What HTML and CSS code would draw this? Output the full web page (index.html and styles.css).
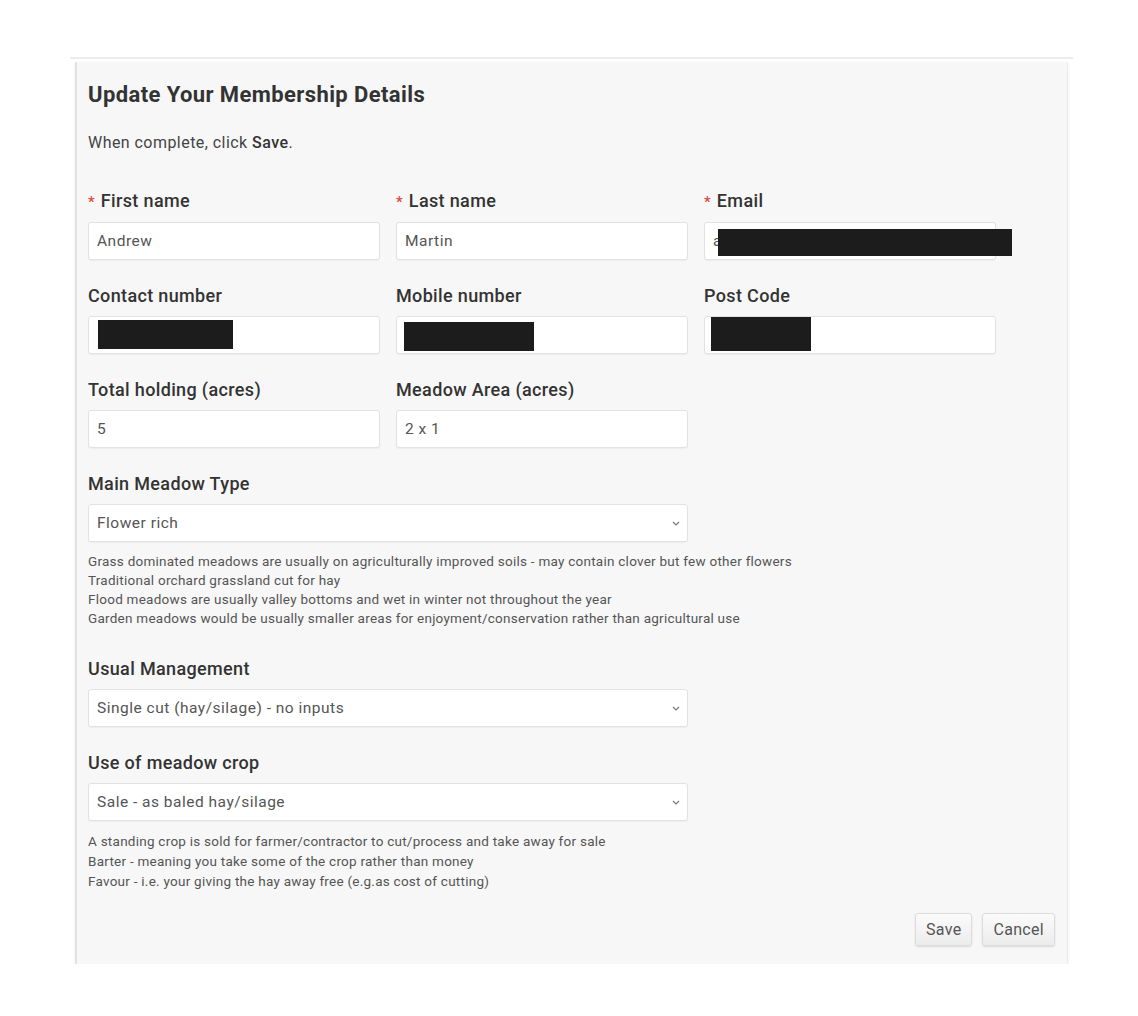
FILE: index.html
```html
<!DOCTYPE html>
<html lang="en">
<head>
    <meta charset="UTF-8">
    <meta name="viewport" content="width=device-width, initial-scale=1.0">
    <title>Update Your Membership Details</title>
    <link rel="stylesheet" href="styles.css">
</head>
<body>
    <div class="page">
        <div class="top-rule"></div>
        <div class="card">
            <h1>Update Your Membership Details</h1>
            <p class="intro">When complete, click <b>Save</b>.</p>

            <div class="row">
                <div class="field">
                    <label><span class="req">*</span> First name</label>
                    <input type="text" class="text-input" value="Andrew">
                </div>
                <div class="field">
                    <label><span class="req">*</span> Last name</label>
                    <input type="text" class="text-input" value="Martin">
                </div>
                <div class="field">
                    <label><span class="req">*</span> Email</label>
                    <div class="input-wrap">
                        <input type="text" class="text-input" value="a">
                        <span class="redact redact-email"></span>
                    </div>
                </div>
            </div>

            <div class="row">
                <div class="field">
                    <label>Contact number</label>
                    <div class="input-wrap">
                        <input type="text" class="text-input" value="">
                        <span class="redact redact-contact"></span>
                    </div>
                </div>
                <div class="field">
                    <label>Mobile number</label>
                    <div class="input-wrap">
                        <input type="text" class="text-input" value="">
                        <span class="redact redact-mobile"></span>
                    </div>
                </div>
                <div class="field">
                    <label>Post Code</label>
                    <div class="input-wrap">
                        <input type="text" class="text-input" value="">
                        <span class="redact redact-post"></span>
                    </div>
                </div>
            </div>

            <div class="row">
                <div class="field">
                    <label>Total holding (acres)</label>
                    <input type="text" class="text-input" value="5">
                </div>
                <div class="field">
                    <label>Meadow Area (acres)</label>
                    <input type="text" class="text-input" value="2 x 1">
                </div>
            </div>

            <div class="field wide with-help">
                <label>Main Meadow Type</label>
                <select class="select-input">
                    <option>Flower rich</option>
                </select>
                <div class="help">
                    Grass dominated meadows are usually on agriculturally improved soils - may contain clover but few other flowers<br>
                    Traditional orchard grassland cut for hay<br>
                    Flood meadows are usually valley bottoms and wet in winter not throughout the year<br>
                    Garden meadows would be usually smaller areas for enjoyment/conservation rather than agricultural use
                </div>
            </div>

            <div class="field wide">
                <label>Usual Management</label>
                <select class="select-input">
                    <option>Single cut (hay/silage) - no inputs</option>
                </select>
            </div>

            <div class="field wide">
                <label>Use of meadow crop</label>
                <select class="select-input">
                    <option>Sale - as baled hay/silage</option>
                </select>
                <div class="help help-tight">
                    A standing crop is sold for farmer/contractor to cut/process and take away for sale<br>
                    Barter - meaning you take some of the crop rather than money<br>
                    Favour - i.e. your giving the hay away free (e.g.as cost of cutting)
                </div>
            </div>

            <div class="actions">
                <button class="btn">Save</button>
                <button class="btn">Cancel</button>
            </div>
        </div>
    </div>
</body>
</html>
```

FILE: styles.css
```css
body {
    margin: 0;
    background-color: #fff;
    font-family: Roboto, "Liberation Sans", Arial, sans-serif;
    color: #333;
}

.page {
    padding: 57px 0 0 70px;
    width: 1003px;
}

.top-rule {
    height: 2px;
    background-color: #ececec;
    margin-bottom: 3px;
}

.card {
    margin: 0 5px;
    padding: 20px 12px 18px 11px;
    background-color: #f7f7f7;
    border-left: 2px solid #e2e2e2;
    border-right: 1px solid #ececec;
    box-shadow: 0 2px 3px rgba(0, 0, 0, 0.08);
}

h1 {
    margin: 0;
    font-size: 22px;
    font-weight: 700;
    line-height: 26px;
    letter-spacing: 0.4px;
    color: #333;
}

.intro {
    margin: 25px 0 38px;
    font-size: 16px;
    line-height: 20px;
    letter-spacing: 0.45px;
    color: #444;
}

.intro b {
    font-weight: 500;
    color: #333;
}

/* form rows */
.row {
    display: flex;
    gap: 16px;
}

.field {
    width: 292px;
    margin-bottom: 26px;
}

.field.wide {
    width: 600px;
}

.field.with-help {
    margin-bottom: 31px;
}

.field label {
    display: block;
    font-size: 18px;
    font-weight: 500;
    line-height: 20px;
    letter-spacing: 0.35px;
    margin-bottom: 10px;
    color: #333;
}

.req {
    color: #e0463c;
    font-size: 15px;
    margin-right: 1px;
}

.text-input,
.select-input {
    display: block;
    width: 100%;
    height: 38px;
    box-sizing: border-box;
    padding: 0 8px;
    border: 1px solid #e2e2e2;
    border-radius: 3px;
    background-color: #fff;
    font-family: inherit;
    font-size: 15.5px;
    letter-spacing: 0.5px;
    color: #555;
    box-shadow: 0 1px 1px rgba(0, 0, 0, 0.04);
}

.select-input {
    -webkit-appearance: none;
    appearance: none;
    background-image: url("data:image/svg+xml,%3Csvg xmlns='http://www.w3.org/2000/svg' width='8' height='5' viewBox='0 0 8 5'%3E%3Cpath d='M1 1l3 3 3-3' fill='none' stroke='%23777' stroke-width='1.2'/%3E%3C/svg%3E");
    background-repeat: no-repeat;
    background-position: right 7px center;
}

.input-wrap {
    position: relative;
}

/* blacked-out personal details */
.redact {
    position: absolute;
    background-color: #1c1c1c;
}

.redact-email {
    left: 14px;
    top: 7px;
    width: 294px;
    height: 27px;
}

.redact-contact {
    left: 10px;
    top: 4px;
    width: 135px;
    height: 29px;
}

.redact-mobile {
    left: 8px;
    top: 6px;
    width: 130px;
    height: 29px;
}

.redact-post {
    left: 7px;
    top: 1px;
    width: 100px;
    height: 34px;
}

.help {
    margin-top: 10px;
    font-size: 13.5px;
    line-height: 19px;
    letter-spacing: 0.25px;
    color: #555;
    white-space: nowrap;
}

.help-tight {
    line-height: 20px;
}

.actions {
    display: flex;
    justify-content: flex-end;
    gap: 10px;
    margin-top: -4px;
}

.btn {
    height: 33px;
    padding: 0 10px;
    border: 1px solid #dcdcdc;
    border-radius: 3px;
    background: linear-gradient(#fbfbfb, #ececec);
    box-shadow: 0 1px 2px rgba(0, 0, 0, 0.12);
    font-family: inherit;
    font-size: 16px;
    letter-spacing: 0.3px;
    color: #555;
    cursor: pointer;
}
```
